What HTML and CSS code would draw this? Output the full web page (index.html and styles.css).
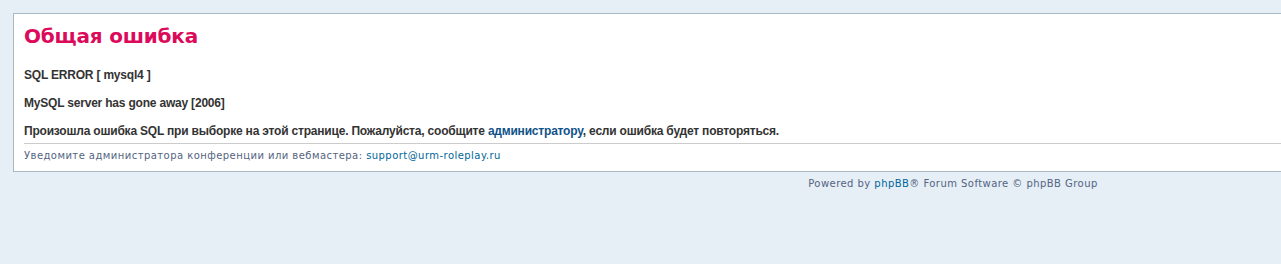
FILE: index.html
```html
<!DOCTYPE html>
<html>
<head>
    <meta charset="utf-8">
    <title>Общая ошибка</title>
    <link rel="stylesheet" href="styles.css">
</head>
<body id="errorpage">
    <div id="wrap">
        <div class="panel">
            <div id="content">
                <h1>Общая ошибка</h1>
                <div class="message">
                    SQL ERROR [ mysql4 ]<br><br>
                    MySQL server has gone away [2006]<br><br>
                    Произошла ошибка SQL при выборке на этой странице. Пожалуйста, сообщите <a href="#">администратору</a>, если ошибка будет повторяться.
                </div>
                <p class="notice">Уведомите администратора конференции или вебмастера: <a href="#">support@urm-roleplay.ru</a></p>
            </div>
        </div>
        <div id="page-footer">
            Powered by <a href="#">phpBB</a>&reg; Forum Software &copy; phpBB Group
        </div>
    </div>
</body>
</html>
```

FILE: styles.css
```css
* {
    margin: 0;
    padding: 0;
}

html, body {
    overflow: hidden;
}

body {
    font-family: Verdana, "DejaVu Sans", sans-serif;
    color: #536482;
    background: #E6EEF6;
    font-size: 10px;
    letter-spacing: 0.45px;
}

a:link, a:visited, a:active {
    color: #006699;
    text-decoration: none;
}

a:hover {
    color: #DD6900;
    text-decoration: underline;
}

#wrap {
    width: 1880px;
    padding: 13px 0 15px 13px;
}

.panel {
    background: #FFFFFF;
    border: 1px solid #A9B8C2;
    margin-bottom: 5px;
}

#content {
    padding: 10px 10px 9px;
}

#content h1 {
    font-family: "DejaVu Sans", Verdana, sans-serif;
    font-size: 20px;
    font-weight: bold;
    line-height: 24px;
    letter-spacing: -0.2px;
    color: #DC0A5A;
}

#content .message {
    margin-top: 20px;
    margin-bottom: 5px;
    padding-bottom: 5px;
    border-bottom: 1px solid #CCCCCC;
    color: #333333;
    font: bold 12px "Liberation Sans", Arial, sans-serif;
    line-height: 14px;
    letter-spacing: -0.2px;
}

#content .message a {
    color: #105289;
}

.notice {
    line-height: 12px;
    padding-top: 1px;
}

#page-footer {
    text-align: center;
    line-height: 14px;
}
```
